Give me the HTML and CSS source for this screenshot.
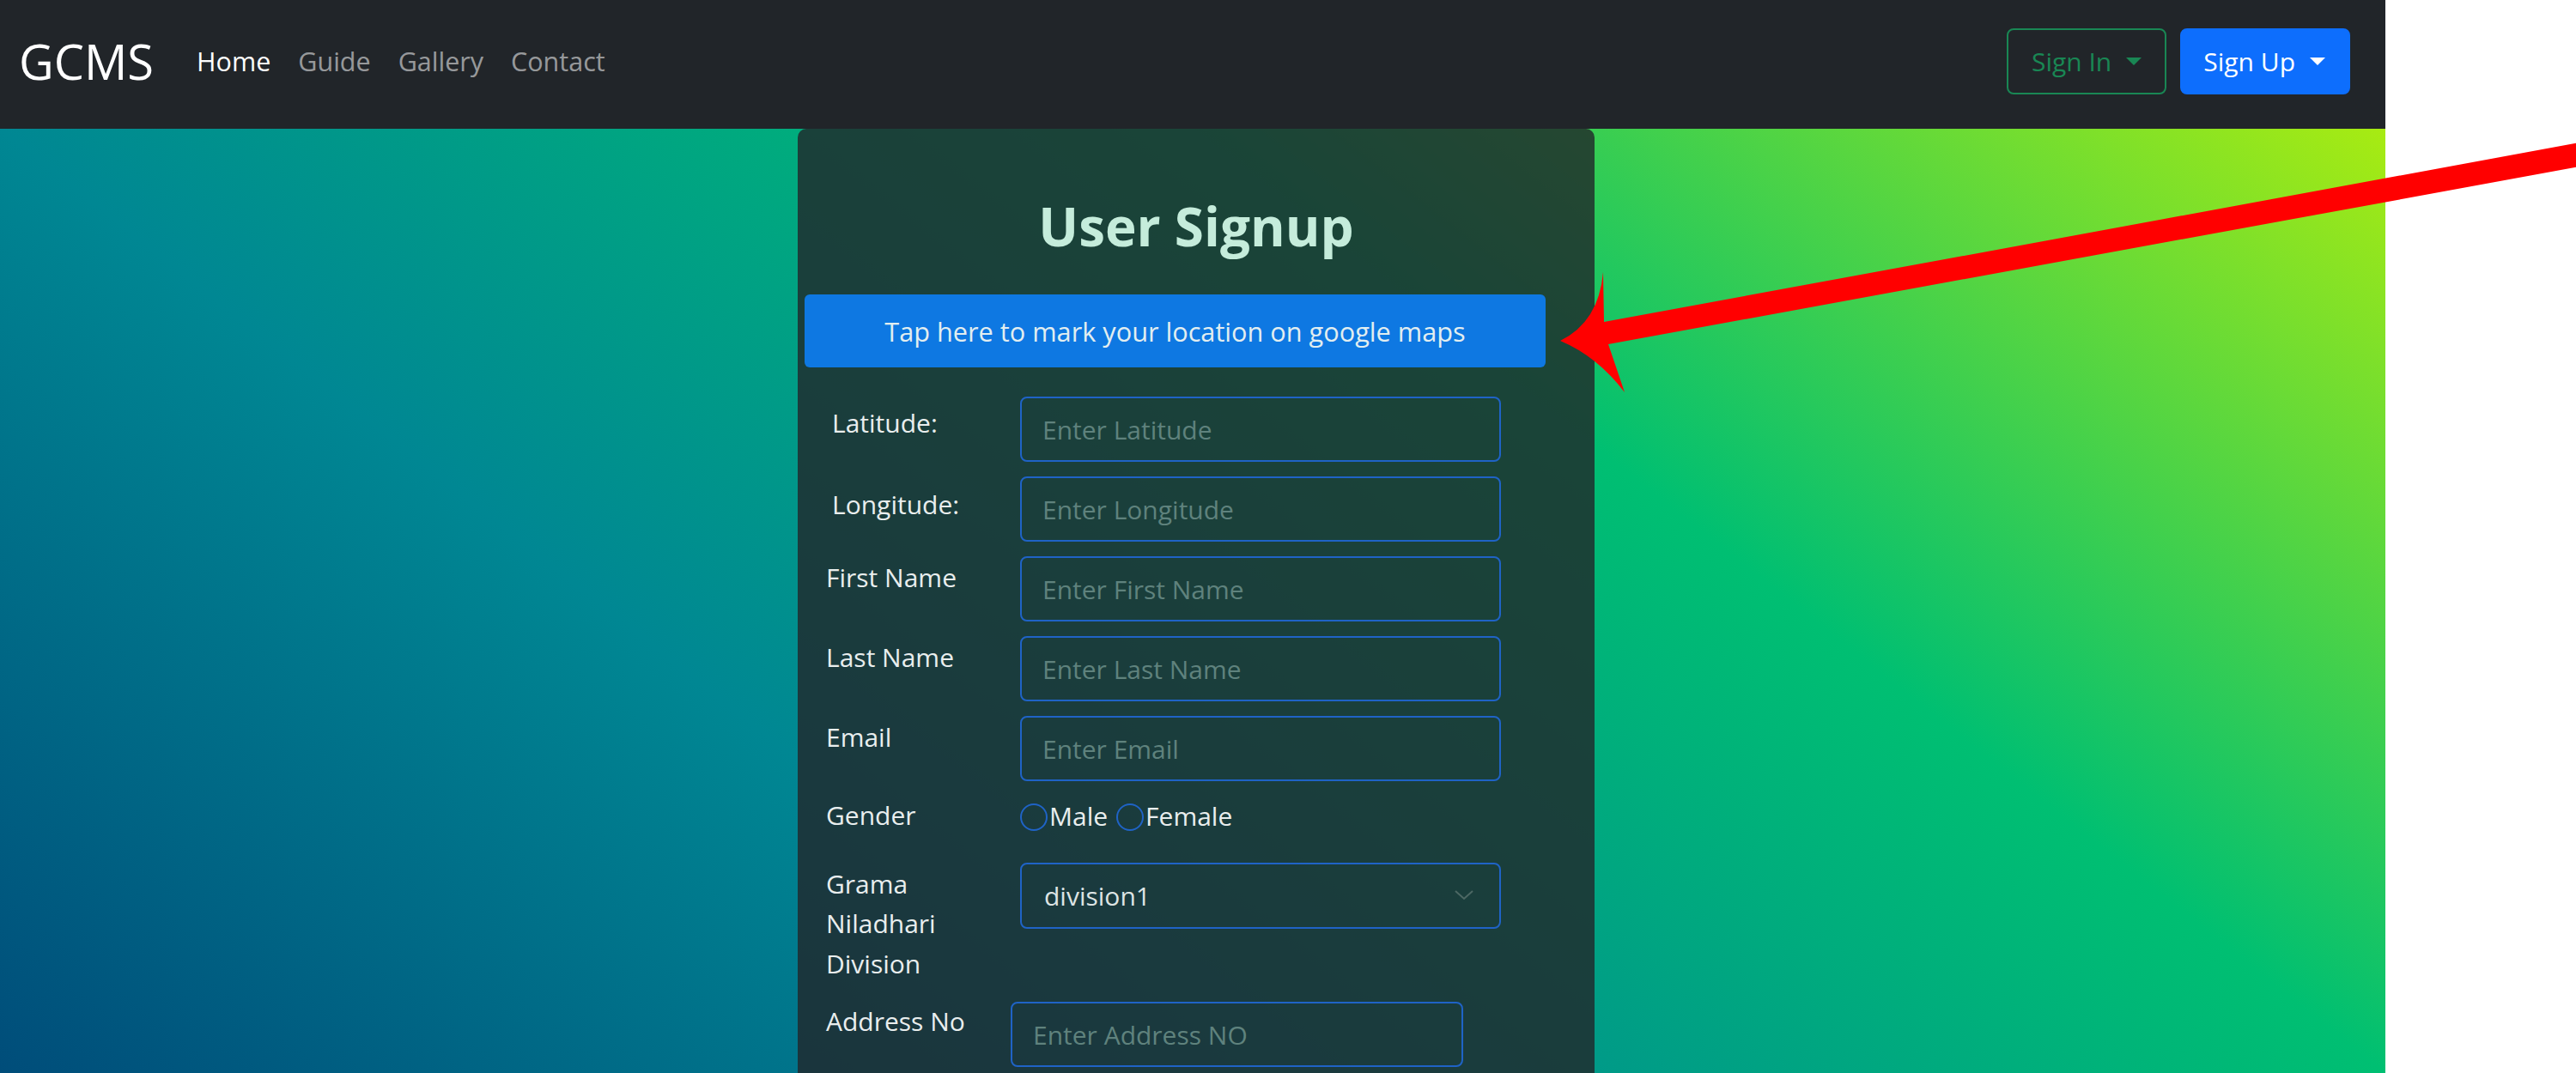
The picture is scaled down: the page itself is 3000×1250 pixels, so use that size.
FILE: index.html
```html
<!DOCTYPE html>
<html lang="en">
<head>
<meta charset="utf-8">
<title>GCMS - User Signup</title>
<link rel="stylesheet" href="styles.css">
</head>
<body>
<div class="page">
  <nav class="navbar">
    <a class="brand" href="#">GCMS</a>
    <ul class="nav-links">
      <li><a class="nav-link active" href="#">Home</a></li>
      <li><a class="nav-link" href="#">Guide</a></li>
      <li><a class="nav-link" href="#">Gallery</a></li>
      <li><a class="nav-link" href="#">Contact</a></li>
    </ul>
    <div class="nav-actions">
      <button class="btn btn-outline-success">Sign In<span class="caret"></span></button>
      <button class="btn btn-primary">Sign Up<span class="caret"></span></button>
    </div>
  </nav>
  <main class="hero">
    <section class="card">
      <h1 class="card-title">User Signup</h1>
      <button class="map-btn">Tap here to mark your location on google maps</button>
      <form class="form">
        <div class="row">
          <label class="label label-geo">Latitude:</label>
          <input class="field" type="text" placeholder="Enter Latitude">
        </div>
        <div class="row">
          <label class="label label-geo label-long">Longitude:</label>
          <input class="field" type="text" placeholder="Enter Longitude">
        </div>
        <div class="row">
          <label class="label">First Name</label>
          <input class="field" type="text" placeholder="Enter First Name">
        </div>
        <div class="row">
          <label class="label">Last Name</label>
          <input class="field" type="text" placeholder="Enter Last Name">
        </div>
        <div class="row">
          <label class="label">Email</label>
          <input class="field" type="email" placeholder="Enter Email">
        </div>
        <div class="row row-gender">
          <label class="label label-plain">Gender</label>
          <div class="radios">
            <input class="radio" type="radio" name="gender" id="male"><label class="radio-label" for="male">Male</label>
            <input class="radio" type="radio" name="gender" id="female"><label class="radio-label" for="female">Female</label>
          </div>
        </div>
        <div class="row row-grama">
          <label class="label label-grama">Grama Niladhari Division</label>
          <div class="select">
            <span class="select-value">division1</span>
            <svg class="chevron" width="22" height="12" viewBox="0 0 22 12"><polyline points="1,1 11,10 21,1" fill="none" stroke="#4d6864" stroke-width="2"/></svg>
          </div>
        </div>
        <div class="row">
          <label class="label label-address">Address No</label>
          <input class="field field-address" type="text" placeholder="Enter Address NO">
        </div>
      </form>
    </section>
  </main>
</div>
<svg class="annotation" width="3000" height="1250" viewBox="0 0 3000 1250">
  <path d="M 3010 165 L 1868 375 L 1867 317 Q 1862 375 1817 397 Q 1860 415 1892 457 L 1873 401 L 3010 193 Z" fill="#ff0000"/>
</svg>
</body>
</html>
```

FILE: styles.css
```css
html, body {
  margin: 0;
  padding: 0;
}
body {
  width: 3000px;
  height: 1250px;
  overflow: hidden;
  background: #ffffff;
  font-family: "Open Sans", "Noto Sans", sans-serif;
  position: relative;
}
.page {
  width: 2778px;
}
.navbar {
  height: 150px;
  box-sizing: border-box;
  background: #212529;
  display: flex;
  align-items: center;
  padding: 0 41px 7px 22px;
}
.brand {
  font-size: 56px;
  color: #ffffff;
  text-decoration: none;
  margin-right: 34px;
  line-height: 1.2;
}
.nav-links {
  list-style: none;
  margin: 0;
  padding: 0;
  display: flex;
}
.nav-link {
  display: block;
  padding: 0 16px;
  font-size: 30.5px;
  line-height: 1.5;
  color: rgba(255, 255, 255, 0.55);
  text-decoration: none;
}
.nav-link.active {
  color: #ffffff;
}
.nav-actions {
  margin-left: auto;
  display: flex;
  gap: 16px;
}
.btn {
  height: 77px;
  box-sizing: border-box;
  border-radius: 8px;
  font-family: inherit;
  font-size: 30px;
  padding: 0 27px 0 25px;
  display: flex;
  align-items: center;
  cursor: pointer;
}
.btn-outline-success {
  background: transparent;
  color: #198754;
  border: 2px solid #198754;
  padding-left: 27px;
}
.btn-primary {
  background: #0d6efd;
  color: #ffffff;
  border: 2px solid #0d6efd;
}
.caret {
  display: inline-block;
  margin-left: 17px;
  width: 0;
  height: 0;
  border-top: 9px solid currentColor;
  border-left: 9.5px solid transparent;
  border-right: 9.5px solid transparent;
}
.hero {
  height: 1100px;
  box-sizing: border-box;
  background: linear-gradient(to right top, #051937, #004d7a, #008793, #00bf72, #a8eb12) top left / 100% 2200px no-repeat;
  display: flex;
  justify-content: center;
  padding-left: 8px;
  overflow: hidden;
}
.card {
  width: 928px;
  box-sizing: border-box;
  background: rgba(33, 37, 41, 0.8);
  border-radius: 10px;
  padding: 0 8px;
  align-self: flex-start;
  min-height: 1200px;
}
.card-title {
  margin: 76px 0 43px;
  text-align: center;
  font-size: 62px;
  line-height: 74px;
  font-weight: 700;
  color: #c5ecdb;
}
.map-btn {
  display: block;
  width: 863px;
  height: 85px;
  border: none;
  border-radius: 6px;
  background: #0e78e2;
  color: #e2eef0;
  font-family: inherit;
  font-size: 30.7px;
  padding: 0;
  cursor: pointer;
}
.form {
  margin-top: 34px;
  padding-left: 25px;
}
.row {
  display: flex;
  align-items: flex-start;
  margin-bottom: 17px;
}
.label {
  flex: 0 0 200px;
  margin-right: 26px;
  padding-top: 2px;
  font-size: 30px;
  line-height: 46.5px;
  color: #e9eeee;
}
.label-geo {
  flex-basis: 193px;
  padding-left: 7px;
  padding-top: 8px;
}
.label-long {
  padding-top: 10px;
}
.label-plain {
  padding-top: 0;
}
.label-grama {
  padding-top: 2px;
}
.row-grama {
  margin-bottom: 21px;
}
.label-address {
  margin-right: 15px;
  padding-top: 0;
}
.field {
  width: 560px;
  height: 76px;
  box-sizing: border-box;
  border: 2px solid #1f63c6;
  border-radius: 8px;
  background: transparent;
  padding: 0 24px;
  font-family: inherit;
  font-size: 30px;
  color: #dde4e4;
  outline: none;
}
.field::placeholder {
  color: #5f827d;
}
.field-address {
  width: 527px;
}
.row-gender {
  margin-bottom: 31px;
}
.radios {
  display: flex;
  align-items: center;
  height: 46.5px;
}
.radio {
  appearance: none;
  -webkit-appearance: none;
  width: 32px;
  height: 32px;
  box-sizing: border-box;
  margin: 3px 2px 0 0;
  border: 2px solid #1f63c6;
  border-radius: 50%;
  background: transparent;
}
.radio-label {
  font-size: 30px;
  color: #e9eeee;
  margin-right: 10px;
}
.select {
  width: 560px;
  height: 77px;
  box-sizing: border-box;
  border: 2px solid #1f63c6;
  border-radius: 8px;
  display: flex;
  align-items: center;
  padding: 0 30px 0 26px;
}
.select-value {
  font-size: 30px;
  color: #dde4e4;
}
.chevron {
  margin-left: auto;
}
.annotation {
  position: absolute;
  left: 0;
  top: 0;
  pointer-events: none;
}
```
